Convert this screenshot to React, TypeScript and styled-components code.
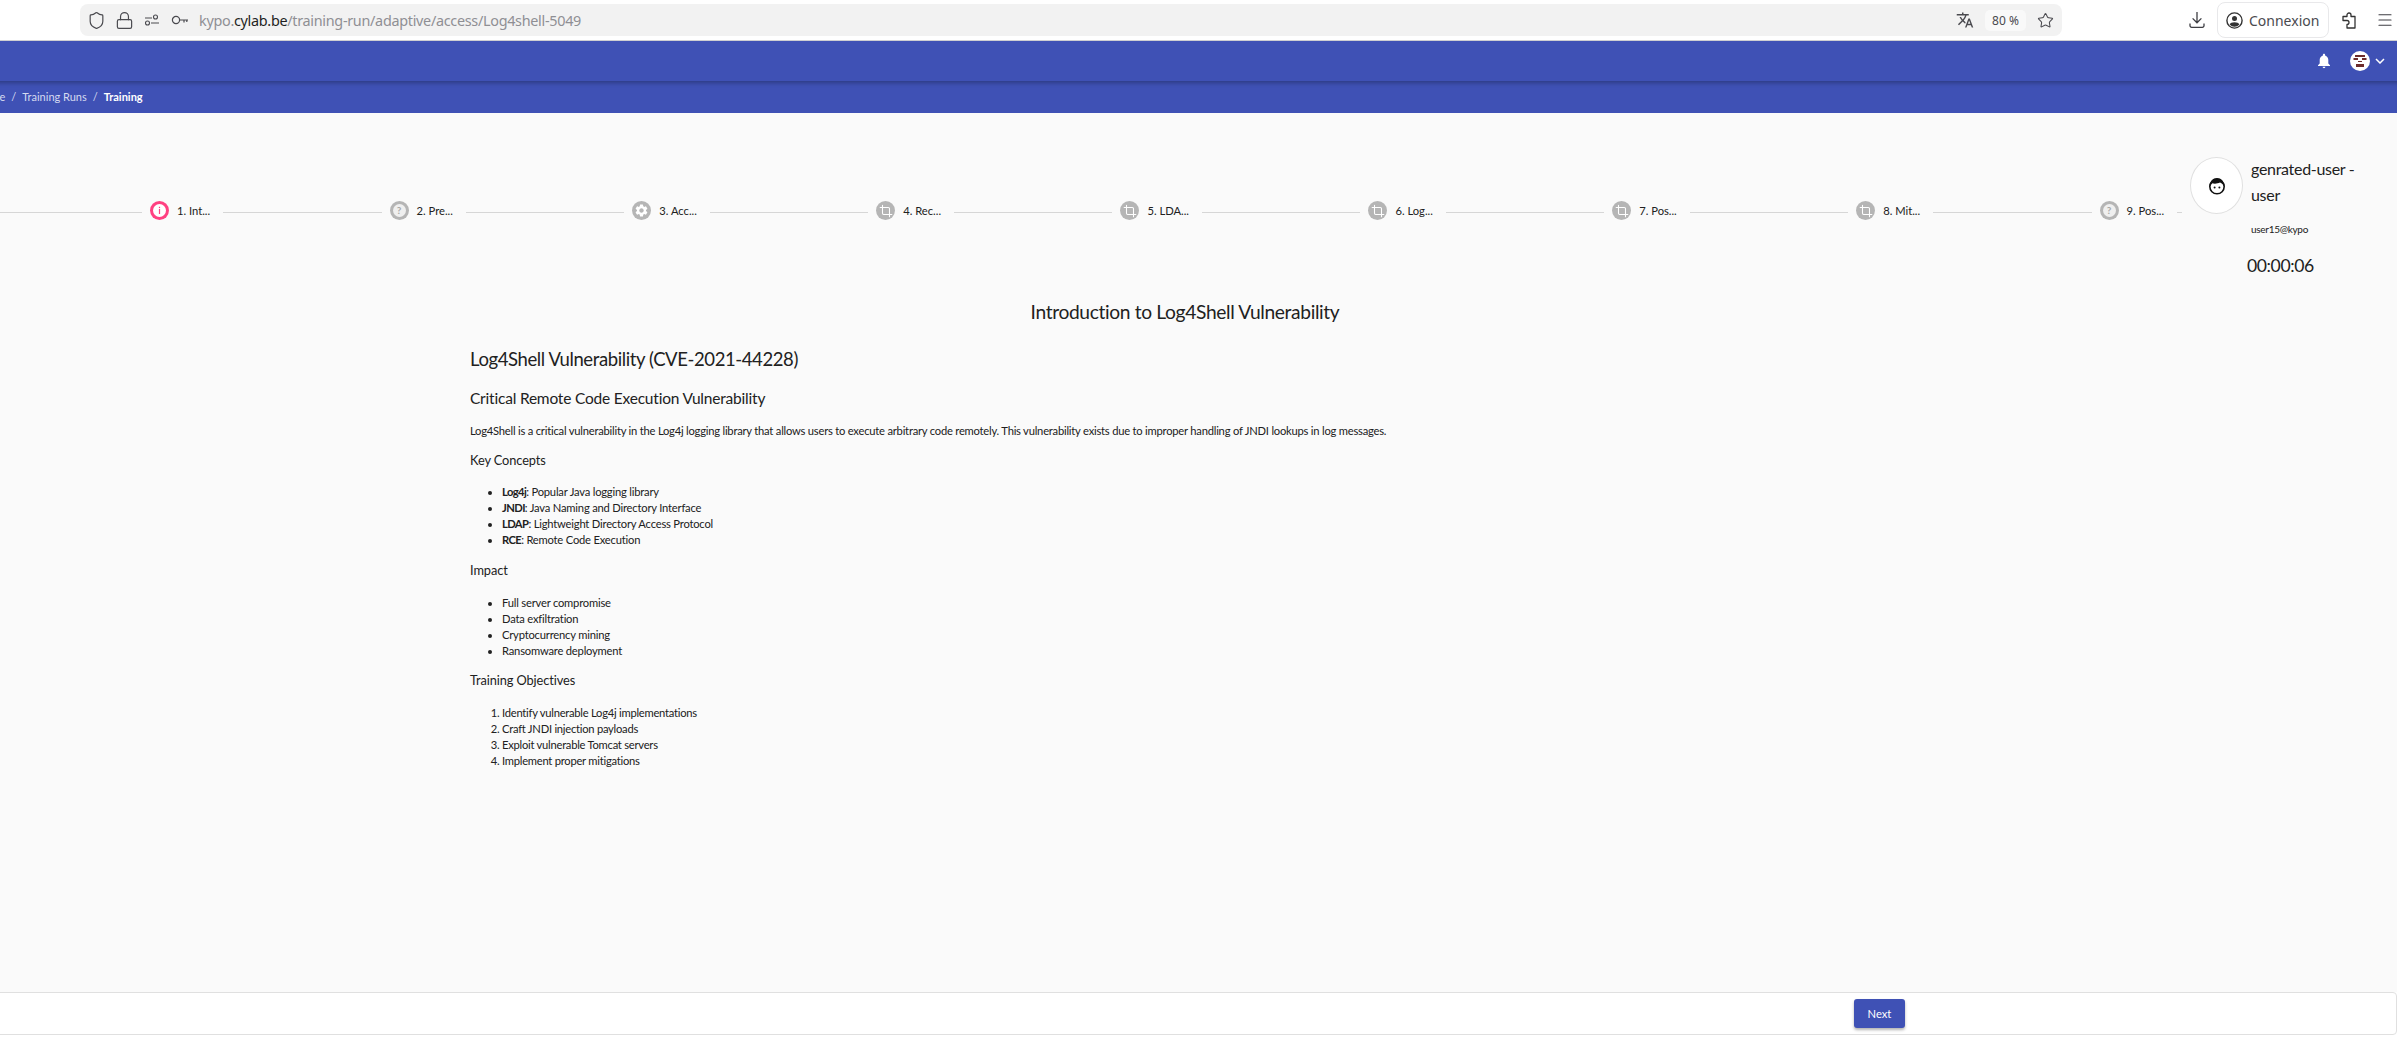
import { Crop, Lock, Menu, Shield, Star } from "lucide-react";
import { Fragment } from "react";
import { MdSettings, MdTranslate } from "react-icons/md";
import styled, { createGlobalStyle } from "styled-components";

const GlobalStyle = createGlobalStyle`
	html, body {
		margin: 0;
		padding: 0;
		background: #fff;
		overflow: hidden;
	}
	* {
		box-sizing: border-box;
	}
`;

const pageFont = `"Lato", "Noto Sans", sans-serif`;
const chromeFont = `"Noto Sans", "Open Sans", sans-serif`;

const Page = styled.div`
	display: flex;
	flex-direction: column;
	width: 2397px;
	height: 1048px;
	overflow: hidden;
	font-family: ${pageFont};
	color: #212121;
`;

/* browser chrome */
const BrowserBar = styled.div`
	display: flex;
	align-items: center;
	height: 41px;
	flex: none;
	background: #fff;
	border-bottom: 1px solid #cfcfd2;
	font-family: ${chromeFont};
	padding-left: 80px;
`;

const UrlBar = styled.div`
	display: flex;
	align-items: center;
	width: 1982px;
	height: 32px;
	border-radius: 8px;
	background: #f2f2f2;
	padding: 0 8px 0 2px;
	color: #4a4a4f;
`;

const UrlIcon = styled.span`
	display: flex;
	justify-content: center;
	width: 28px;
	flex: none;
`;

const UrlText = styled.div`
	flex: 1;
	margin-left: 5px;
	font-size: 14.4px;
	letter-spacing: -0.3px;
	color: #8f8f94;
	white-space: nowrap;
	b {
		font-weight: 400;
		color: #1f1f22;
	}
`;

const ZoomBadge = styled.div`
	width: 41px;
	height: 21px;
	margin: 0 11px 0 11px;
	border-radius: 5px;
	background: #f9f9f9;
	font-size: 12px;
	line-height: 21px;
	text-align: center;
	color: #4a4a4f;
`;

const ToolIcon = styled.span<{ $left: number }>`
	display: flex;
	justify-content: center;
	flex: none;
	width: 24px;
	margin-left: ${(p) => p.$left}px;
	color: #3f3f44;
`;

const SignIn = styled.div`
	display: flex;
	align-items: center;
	gap: 6px;
	width: 112px;
	height: 36px;
	margin-left: 8px;
	padding-left: 8px;
	border: 1px solid #e8e8ea;
	border-radius: 8px;
	font-size: 14px;
	color: #4a4a4f;
`;

/* app toolbar */
const AppHeader = styled.header`
	display: flex;
	align-items: center;
	justify-content: flex-end;
	height: 40px;
	flex: none;
	padding-right: 12px;
	background: #3f51b5;
	color: #fff;
`;

const Bell = styled.span`
	display: flex;
	margin-right: 19px;
`;

const UserBadge = styled.span`
	display: flex;
	width: 20px;
	height: 20px;
	margin-right: 5px;
`;

const Breadcrumbs = styled.nav`
	display: flex;
	align-items: center;
	flex: none;
	height: 32px;
	margin-left: -24px;
	padding-bottom: 2px;
	background: #3f51b5;
	box-shadow: inset 0 5px 4px -3px rgba(0, 0, 0, 0.28);
	font-size: 11px;
	color: #d5daf0;
`;

const Crumb = styled.span<{ $current?: boolean }>`
	color: ${(p) => (p.$current ? "#fff" : "#d5daf0")};
	font-weight: ${(p) => (p.$current ? 700 : 400)};
`;

const CrumbSep = styled.span`
	margin: 0 6px;
`;

/* main area */
const Main = styled.main`
	flex: 1;
	background: #fafafa;
`;

const TopRow = styled.div`
	display: flex;
	align-items: flex-start;
	padding-top: 43px;
`;

const Stepper = styled.div`
	display: flex;
	align-items: center;
	flex: none;
	width: 2182px;
	height: 19px;
	margin-top: 45px;
`;

const Connector = styled.div<{ $width?: number }>`
	height: 1px;
	margin-top: 3px;
	background: #d6d6d6;
	flex: ${(p) => (p.$width ? `0 0 ${p.$width}px` : "1")};
`;

const Step = styled.div`
	display: flex;
	align-items: center;
	gap: 8px;
	flex: none;
	margin: 0 13px 0 8px;
	font-size: 11.2px;
	color: #212121;
	white-space: nowrap;
`;

const Disc = styled.span<{ $active?: boolean }>`
	display: flex;
	align-items: center;
	justify-content: center;
	width: 19px;
	height: 19px;
	border-radius: 50%;
	background: ${(p) => (p.$active ? "#ff4081" : "#b5b5b5")};
	color: #fff;
`;

const HelpMark = styled.span`
	width: 13px;
	height: 13px;
	border-radius: 50%;
	background: #efefef;
	color: #a8a8a8;
	font-size: 10px;
	font-weight: 700;
	line-height: 13px;
	text-align: center;
`;

const UserPanel = styled.aside`
	flex: none;
	width: 207px;
	margin-left: 8px;
`;

const UserRow = styled.div`
	display: flex;
	gap: 8px;
`;

const Avatar = styled.div`
	display: flex;
	align-items: center;
	justify-content: center;
	flex: none;
	width: 53px;
	height: 57px;
	margin-top: 1px;
	border: 1px solid #e0e0e0;
	border-radius: 50%;
	background: #fff;
`;

const UserName = styled.div`
	width: 110px;
	font-size: 16px;
	letter-spacing: -0.3px;
	line-height: 26px;
`;

const UserMail = styled.div`
	margin: 8px 0 0 61px;
	font-size: 10px;
	letter-spacing: -0.3px;
	line-height: 14px;
`;

const Timer = styled.div`
	margin: 18px 0 0 57px;
	font-size: 17.6px;
	letter-spacing: -0.4px;
	line-height: 24px;
`;

const LevelTitle = styled.h2`
	width: 2370px;
	margin: 22px 0 0;
	font-size: 19.2px;
	font-weight: 400;
	letter-spacing: -0.35px;
	line-height: 24px;
	text-align: center;
`;

const Article = styled.article`
	padding: 23px 0 0 470px;
`;

const Heading = styled.h1`
	margin: 0;
	font-size: 18.5px;
	font-weight: 400;
	letter-spacing: -0.4px;
	line-height: 24px;
`;

const SubHeading = styled.h2`
	margin: 17px 0 0;
	font-size: 15.5px;
	font-weight: 400;
	letter-spacing: -0.2px;
	line-height: 20px;
`;

const Paragraph = styled.p`
	margin: 15px 0 0;
	font-size: 11.2px;
	letter-spacing: -0.22px;
	line-height: 16px;
`;

const Section = styled.h3<{ $top: number }>`
	margin: ${(p) => p.$top}px 0 0;
	font-size: 12.8px;
	font-weight: 400;
	letter-spacing: -0.1px;
	line-height: 16px;
`;

const BulletList = styled.ul<{ $top: number }>`
	margin: ${(p) => p.$top}px 0 0;
	padding-left: 32px;
	font-size: 11.2px;
	letter-spacing: -0.2px;
	line-height: 16px;
	b {
		font-weight: 700;
		letter-spacing: -0.6px;
	}
`;

const NumberList = styled.ol`
	margin: 17px 0 0;
	padding-left: 32px;
	font-size: 11.2px;
	letter-spacing: -0.25px;
	line-height: 16px;
`;

/* bottom actions */
const ActionBar = styled.footer`
	display: flex;
	align-items: center;
	justify-content: flex-end;
	flex: none;
	height: 43px;
	margin: 0 0 13px -20px;
	padding-right: 491px;
	background: #fff;
	border: 1px solid #e0e0e0;
	border-radius: 4px;
`;

const NextButton = styled.button`
	width: 51px;
	height: 29px;
	border: 0;
	border-radius: 3px;
	background: #3f51b5;
	box-shadow: 0 2px 3px rgba(0, 0, 0, 0.3);
	color: #fff;
	font-family: ${pageFont};
	font-size: 11.2px;
`;

const SlidersGlyph = () => (
	<svg width="16" height="16" viewBox="0 0 16 16" fill="none" stroke="#4a4a4f" strokeWidth="1.1">
		<circle cx="11.5" cy="5" r="2" />
		<path d="M1 6h7M7 11h8" />
		<circle cx="3.5" cy="11" r="2" />
	</svg>
);

const KeyGlyph = () => (
	<svg width="18" height="14" viewBox="0 0 18 14" fill="none" stroke="#4a4a4f" strokeWidth="1.2">
		<circle cx="5" cy="7" r="3.6" />
		<path d="M8.6 7H17M13 7v2.6M15.8 7v2" />
	</svg>
);

const DownloadGlyph = () => (
	<svg width="16" height="18" viewBox="0 0 16 18" fill="none" stroke="#3f3f44" strokeWidth="1.3">
		<path d="M8 1v10.5M3.6 7.4 8 11.8l4.4-4.4M1 12.5v2.2a1.6 1.6 0 0 0 1.6 1.6h10.8a1.6 1.6 0 0 0 1.6-1.6v-2.2" />
	</svg>
);

const AccountGlyph = () => (
	<svg width="17" height="17" viewBox="0 0 17 17">
		<circle cx="8.5" cy="8.5" r="7.6" fill="none" stroke="#333" strokeWidth="1.4" />
		<circle cx="8.5" cy="6.4" r="2.5" fill="#333" />
		<path d="M3.6 12.6c.7-1.6 2.4-2.4 4.9-2.4s4.2.8 4.9 2.4a6.6 6.6 0 0 1-9.8 0z" fill="#333" />
	</svg>
);

const PuzzleGlyph = () => (
	<svg width="14" height="17" viewBox="0 0 14 17" fill="none" stroke="#333" strokeWidth="1.3" strokeLinejoin="round">
		<path d="M1 4.500H5V3a2 2 0 0 1 4 0V4.500H13V16H5V12.500a2 2 0 0 0 0-4H1z" />
	</svg>
);

const BellGlyph = () => (
	<svg width="14" height="16" viewBox="0 0 14 16" fill="#fff">
		<path d="M7 0.8c-.7 0-1.1.5-1.1 1.1v.5C3.900 3 2.700 4.700 2.700 6.800v3.700L1 12.200v.8h12v-.8l-1.700-1.700V6.800c0-2.100-1.200-3.800-3.200-4.400v-.5C8.100 1.300 7.700.8 7 .8zM5.600 13.800a1.400 1.400 0 0 0 2.800 0z" />
	</svg>
);

const UserIdenticon = () => (
	<svg width="20" height="20" viewBox="0 0 20 20">
		<circle cx="10" cy="10" r="10" fill="#fff" />
		<path d="M5 4h10v2H5zM3.500 7H8v2H3.500zM12 7h4.500v2H12zM8 10h4v1H8zM6 13h8v3H6z" fill="#6d2c2c" />
	</svg>
);

const ChevronGlyph = () => (
	<svg width="10" height="6" viewBox="0 0 10 6" fill="none" stroke="#fff" strokeWidth="1.5">
		<path d="M1 1l4 4 4-4" />
	</svg>
);

const InfoGlyph = () => (
	<svg width="13" height="13" viewBox="0 0 13 13">
		<circle cx="6.500" cy="6.500" r="6.500" fill="#fff" />
		<rect x="5.900" y="2.800" width="1.200" height="1.300" fill="#ff4081" />
		<rect x="5.900" y="5" width="1.200" height="5" fill="#ff4081" />
	</svg>
);

const FaceGlyph = () => (
	<svg width="18" height="18" viewBox="0 0 18 18">
		<circle cx="9" cy="9.600" r="7.200" fill="#fff" stroke="#111" strokeWidth="1.600" />
		<path d="M2 9.500C1.600 4.200 5 1 9 1s7.400 3.200 7 8.500c-1.200-2.400-2.600-3.500-4-3.900-2.400 1.200-6.400 1.300-7.600.6C3.400 7 2.600 8.200 2 9.500z" fill="#111" />
		<circle cx="6.600" cy="10.600" r="1" fill="#111" />
		<circle cx="11.400" cy="10.600" r="1" fill="#111" />
	</svg>
);

const steps = [
	{ label: "1. Int...", kind: "info" },
	{ label: "2. Pre...", kind: "question" },
	{ label: "3. Acc...", kind: "gear" },
	{ label: "4. Rec...", kind: "crop" },
	{ label: "5. LDA...", kind: "crop" },
	{ label: "6. Log...", kind: "crop" },
	{ label: "7. Pos...", kind: "crop" },
	{ label: "8. Mit...", kind: "crop" },
	{ label: "9. Pos...", kind: "question" },
];

const StepIcon = ({ kind }: { kind: string }) => {
	if (kind === "info") return <InfoGlyph />;
	if (kind === "question") return <HelpMark>?</HelpMark>;
	if (kind === "gear") return <MdSettings size={15} />;
	return <Crop size={14} strokeWidth={1.8} />;
};

function App() {
	return (
		<Page>
			<GlobalStyle />
			<BrowserBar>
				<UrlBar>
					<UrlIcon>
						<Shield size={19} strokeWidth={1.5} />
					</UrlIcon>
					<UrlIcon>
						<Lock size={19} strokeWidth={1.5} />
					</UrlIcon>
					<UrlIcon>
						<SlidersGlyph />
					</UrlIcon>
					<UrlIcon>
						<KeyGlyph />
					</UrlIcon>
					<UrlText>
						kypo.<b>cylab.be</b>/training-run/adaptive/access/Log4shell-5049
					</UrlText>
					<MdTranslate size={18} />
					<ZoomBadge>80 %</ZoomBadge>
					<Star size={17} strokeWidth={1.5} />
				</UrlBar>
				<ToolIcon $left={123}>
					<DownloadGlyph />
				</ToolIcon>
				<SignIn>
					<AccountGlyph />
					Connexion
				</SignIn>
				<ToolIcon $left={8}>
					<PuzzleGlyph />
				</ToolIcon>
				<ToolIcon $left={12}>
					<Menu size={18} strokeWidth={1.6} />
				</ToolIcon>
			</BrowserBar>

			<AppHeader>
				<Bell>
					<BellGlyph />
				</Bell>
				<UserBadge>
					<UserIdenticon />
				</UserBadge>
				<ChevronGlyph />
			</AppHeader>
			<Breadcrumbs>
				<Crumb>Home</Crumb>
				<CrumbSep>/</CrumbSep>
				<Crumb>Training Runs</Crumb>
				<CrumbSep>/</CrumbSep>
				<Crumb $current>Training</Crumb>
			</Breadcrumbs>

			<Main>
				<TopRow>
					<Stepper>
						<Connector $width={142} />
						{steps.map((step, i) => (
							<Fragment key={step.label}>
								<Step>
									<Disc $active={step.kind === "info"}>
										<StepIcon kind={step.kind} />
									</Disc>
									{step.label}
								</Step>
								{i < steps.length - 1 ? <Connector /> : <Connector $width={5} />}
							</Fragment>
						))}
					</Stepper>
					<UserPanel>
						<UserRow>
							<Avatar>
								<FaceGlyph />
							</Avatar>
							<UserName>genrated-user - user</UserName>
						</UserRow>
						<UserMail>user15@kypo</UserMail>
						<Timer>00:00:06</Timer>
					</UserPanel>
				</TopRow>

				<LevelTitle>Introduction to Log4Shell Vulnerability</LevelTitle>
				<Article>
					<Heading>Log4Shell Vulnerability (CVE-2021-44228)</Heading>
					<SubHeading>Critical Remote Code Execution Vulnerability</SubHeading>
					<Paragraph>
						Log4Shell is a critical vulnerability in the Log4j logging library that allows users to execute arbitrary code remotely. This vulnerability exists due to improper handling of JNDI lookups in log messages.
					</Paragraph>
					<Section $top={13}>Key Concepts</Section>
					<BulletList $top={16}>
						<li>
							<b>Log4j</b>: Popular Java logging library
						</li>
						<li>
							<b>JNDI</b>: Java Naming and Directory Interface
						</li>
						<li>
							<b>LDAP</b>: Lightweight Directory Access Protocol
						</li>
						<li>
							<b>RCE</b>: Remote Code Execution
						</li>
					</BulletList>
					<Section $top={14}>Impact</Section>
					<BulletList $top={17}>
						<li>Full server compromise</li>
						<li>Data exfiltration</li>
						<li>Cryptocurrency mining</li>
						<li>Ransomware deployment</li>
					</BulletList>
					<Section $top={13}>Training Objectives</Section>
					<NumberList>
						<li>Identify vulnerable Log4j implementations</li>
						<li>Craft JNDI injection payloads</li>
						<li>Exploit vulnerable Tomcat servers</li>
						<li>Implement proper mitigations</li>
					</NumberList>
				</Article>
			</Main>

			<ActionBar>
				<NextButton>Next</NextButton>
			</ActionBar>
		</Page>
	);
}

export default App;
